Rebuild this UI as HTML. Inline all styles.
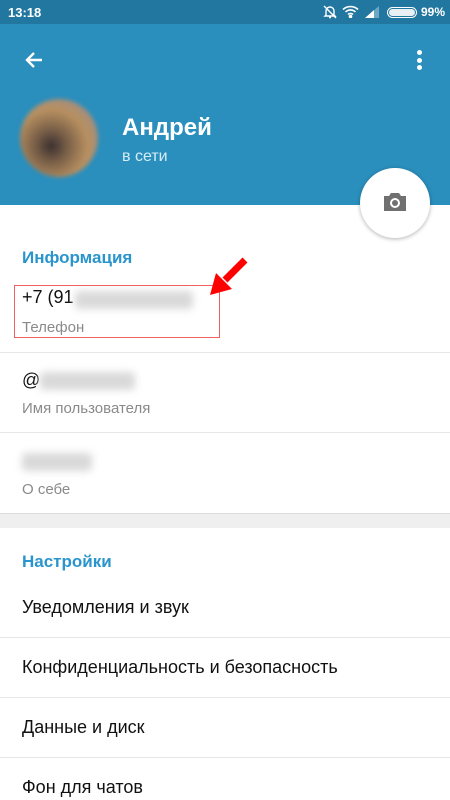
<!DOCTYPE html>
<html><head><meta charset="utf-8"><style>
*{margin:0;padding:0;box-sizing:border-box}
body{width:450px;height:800px;overflow:hidden;background:#fff;font-family:"Liberation Sans",sans-serif;position:relative}
.abs{position:absolute}
.sb{top:0;left:0;width:450px;height:24px;background:#2277a0;color:#fff;font-size:13px;font-weight:bold}
.hd{top:24px;left:0;width:450px;height:181px;background:#2a8fbd}
.t{position:absolute;left:22px;white-space:nowrap}
.main{font-size:18px;color:#111}
.sub{font-size:15px;color:#8a8a8a}
.div{position:absolute;left:0;width:450px;height:1px;background:#e6e6e6}
.blur{position:absolute;background:#d9d9d9;filter:blur(4px);border-radius:4px}
</style></head><body>
<div class="abs sb"><span style="position:absolute;left:8px;top:5px">13:18</span>
<svg class="abs" style="left:322px;top:4px" width="16" height="16" viewBox="0 0 16 16" fill="none" stroke="#fff" stroke-width="1.4"><path d="M4 11V7a4 4 0 0 1 8 0v4l1 1H3zM7 13.5h2M2 2l12 12"/></svg>
<svg class="abs" style="left:342px;top:5px" width="17" height="13" viewBox="0 0 17 13" fill="none" stroke="#fff" stroke-width="1.6"><path d="M1 4.5a11 11 0 0 1 15 0M3.5 7a7 7 0 0 1 10 0M6 9.5a3.5 3.5 0 0 1 5 0"/><circle cx="8.5" cy="11.5" r="1" fill="#fff"/></svg>
<svg class="abs" style="left:365px;top:6px" width="14" height="12"><path d="M0 12h14V0z" fill="#fff" opacity=".35"/><path d="M0 12h9V4z" fill="#fff"/></svg>
<div class="abs" style="left:387px;top:7px;width:30px;height:11px;border:1.5px solid #fff;border-radius:6px;padding:1px"><div style="width:100%;height:100%;background:#e8f0f4;border-radius:4px"></div></div>
<span style="position:absolute;left:421px;top:5px;font-size:12px">99%</span></div>
<div class="abs hd"></div>
<svg class="abs" style="left:22px;top:48px" width="24" height="24" viewBox="0 0 24 24"><path d="M20 12H5M12 5l-7 7 7 7" stroke="#fff" stroke-width="2.4" fill="none"/></svg>
<div class="abs" style="left:417px;top:50px;width:6px;height:20px"><div style="width:5px;height:5px;border-radius:50%;background:#fff;margin-bottom:2.5px"></div><div style="width:5px;height:5px;border-radius:50%;background:#fff;margin-bottom:2.5px"></div><div style="width:5px;height:5px;border-radius:50%;background:#fff"></div></div>
<div class="abs" style="left:20px;top:99px;width:78px;height:78px;border-radius:50%;background:radial-gradient(circle at 40% 60%,#3a3030 0,#7a6048 25%,#b89060 55%,#8c8aa0 100%);filter:blur(2px)"></div>
<div class="abs" style="left:122px;top:114px;color:#fff;font-size:24px;font-weight:bold">Андрей</div>
<div class="abs" style="left:122px;top:148px;color:#d6ecf7;font-size:16px">в сети</div>
<div class="abs" style="left:360px;top:168px;width:70px;height:70px;border-radius:50%;background:#fff;box-shadow:0 1px 4px rgba(0,0,0,.3)"></div>
<svg class="abs" style="left:382px;top:190px" width="26" height="24" viewBox="0 0 26 24"><path d="M2 6h5l2-3h8l2 3h5v15H2z" fill="#707070"/><circle cx="13" cy="13" r="5" fill="#fff"/><circle cx="13" cy="13" r="3" fill="#707070"/></svg>
<div class="t" style="top:248px;font-size:17px;font-weight:bold;color:#2a95cc">Информация</div>
<div class="t main" style="top:287px">+7 (91</div>
<div class="blur" style="left:75px;top:291px;width:118px;height:18px"></div>
<div class="t sub" style="top:319px">Телефон</div>
<div class="abs" style="left:14px;top:285px;width:206px;height:53px;border:1.5px solid #f06060"></div>
<svg class="abs" style="left:205px;top:255px" width="45" height="45" viewBox="0 0 45 45"><path d="M40 5L20 25" stroke="#f00" stroke-width="7"/><path d="M5 40l6-22 16 16z" fill="#f00"/></svg>
<div class="div" style="top:352px"></div>
<div class="t main" style="top:370px">@</div>
<div class="blur" style="left:40px;top:372px;width:95px;height:18px"></div>
<div class="t sub" style="top:400px">Имя пользователя</div>
<div class="div" style="top:432px"></div>
<div class="blur" style="left:22px;top:453px;width:70px;height:18px"></div>
<div class="t sub" style="top:481px">О себе</div>
<div class="abs" style="left:0;top:513px;width:450px;height:15px;background:#efefef;border-top:1px solid #ddd"></div>
<div class="t" style="top:552px;font-size:17px;font-weight:bold;color:#2a95cc">Настройки</div>
<div class="t main" style="top:597px">Уведомления и звук</div>
<div class="div" style="top:637px"></div>
<div class="t main" style="top:657px">Конфиденциальность и безопасность</div>
<div class="div" style="top:697px"></div>
<div class="t main" style="top:717px">Данные и диск</div>
<div class="div" style="top:757px"></div>
<div class="t main" style="top:777px">Фон для чатов</div>
</body></html>
